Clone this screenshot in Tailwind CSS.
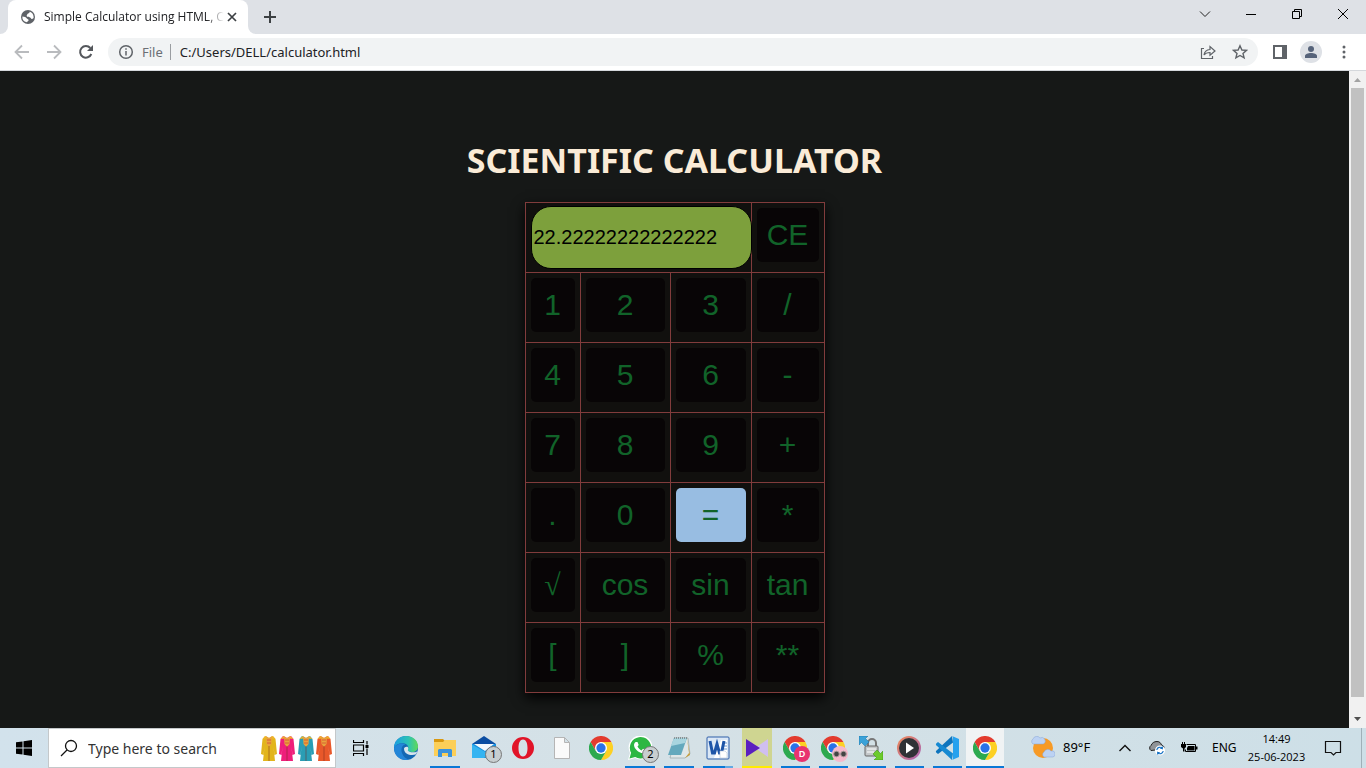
<!DOCTYPE html>
<html lang="en">
<head>
<meta charset="utf-8">
<title>Simple Calculator using HTML, CSS</title>
<script src="https://cdn.jsdelivr.net/npm/@tailwindcss/browser@4"></script>
</head>
<body class="flex h-screen flex-col overflow-hidden bg-[#161817] font-['Noto_Sans','Open_Sans',sans-serif] text-[#202124]">
<svg class="hidden">
  <symbol id="chrome" viewBox="0 0 48 48">
    <path fill="#fdd023" d="M24 24 L24 12 H44.8 A24 24 0 0 1 24 48 L34.4 30 Z"/>
    <path fill="#e33b2e" d="M24 12H44.8A24 24 0 0 0 3.2 12L13.6 30Z"/>
    <path fill="#2da94f" d="M13.6 30L3.2 12A24 24 0 0 0 24 48L34.4 30Z"/>
    <circle cx="24" cy="24" r="12" fill="#fff"/><circle cx="24" cy="24" r="9.3" fill="#2a72e8"/>
  </symbol>
  <symbol id="coat" viewBox="0 0 18 28">
    <path d="M5 2L9 4L13 2L15.500 5L17 20L14.500 21L13.500 13L15 27H3L4.500 13L3.500 21L1 20L2.500 5Z"/>
    <path d="M6 2L9 4L12 2L11.500 10L9 13L6.500 10Z" fill="#e8a33d"/><path d="M9 12V27" stroke="#7a2a1d" stroke-opacity=".5"/><path d="M7 6h4M7 9h4" stroke="#c33" stroke-opacity=".6" stroke-width="1"/>
    <path d="M2.500 5l3-3 1 2.500zM15.500 5l-3-3-1 2.500z" fill="#f0b428"/>
  </symbol>
</svg>

<header class="shrink-0">
  <div class="flex h-[34px] items-stretch justify-between bg-[#dee1e6]">
    <div class="flex">
      <div class="flex w-2 flex-col justify-end bg-white"><div class="h-full rounded-br-lg bg-[#dee1e6]"></div></div>
      <div class="flex w-60 items-center rounded-t-lg bg-white pr-2 pl-3">
        <svg class="size-4 shrink-0" viewBox="0 0 16 16"><circle cx="8" cy="8" r="7" fill="#5f6368"/><path fill="#fff" d="M2.4 7.6C4.5 7.8 6 8.2 6.6 9.2S9 10 8.6 11.4L6.8 13.3C3.5 12.8 2 10.500 2.400 7.600ZM9.500 2.700C10 4.500 7.500 4 7.300 5.300S6 6.500 7 7.400S10.200 7.500 10.800 9.100S12.700 9.700 13.600 9C14 5.500 12 3.300 9.500 2.700Z"/></svg>
        <span class="ml-2 min-w-0 flex-1 overflow-hidden font-['Open_Sans',sans-serif] text-xs whitespace-nowrap [mask-image:linear-gradient(to_right,#000_90%,transparent)]">Simple Calculator using HTML, CSS</span>
        <button aria-label="Close tab" class="flex size-4 items-center justify-center"><svg class="size-4" viewBox="0 0 16 16" stroke="#3c4043" stroke-width="1.7"><path d="M4 4l8 8M12 4l-8 8"/></svg></button>
      </div>
      <div class="w-2 bg-white"><div class="h-full rounded-bl-lg bg-[#dee1e6]"></div></div>
      <button aria-label="New tab" class="ml-1 flex w-5 items-center justify-center"><svg class="size-4" viewBox="0 0 16 16" stroke="#3c4043" stroke-width="2"><path d="M8 2v12M2 8h12"/></svg></button>
    </div>
    <div class="flex h-7 text-black">
      <button aria-label="Search tabs" class="flex w-[46px] items-center justify-center"><svg class="size-3" viewBox="0 0 12 12" fill="none" stroke="#222"><path d="M1 3.500l5 5 5-5"/></svg></button>
      <button aria-label="Minimize" class="flex w-[46px] items-center justify-center"><svg class="size-3" viewBox="0 0 12 12"><path d="M1 6h10v1H1z"/></svg></button>
      <button aria-label="Restore" class="flex w-[46px] items-center justify-center"><svg class="size-3" viewBox="0 0 12 12" fill="none" stroke="#000"><path d="M1.500 3.500h7v7h-7zM3.500 3.500v-2h7v7h-2"/></svg></button>
      <button aria-label="Close" class="flex w-[46px] items-center justify-center"><svg class="size-3" viewBox="0 0 12 12" stroke="#000"><path d="M1 1l10 10M11 1L1 11"/></svg></button>
    </div>
  </div>
  <div class="flex h-[37px] items-center border-b border-[#d5d8dc] bg-white pr-3.5 pl-3">
    <button aria-label="Back" class="flex w-5 justify-center"><svg class="size-4" viewBox="0 0 16 16" fill="none" stroke="#b9bbbe" stroke-width="1.800"><path d="M15 8H2M8 1.500L1.500 8L8 14.500"/></svg></button>
    <button aria-label="Forward" class="ml-3 flex w-5 justify-center"><svg class="size-4" viewBox="0 0 16 16" fill="none" stroke="#b9bbbe" stroke-width="1.800"><path d="M1 8h13M8 1.500L14.500 8L8 14.500"/></svg></button>
    <button aria-label="Reload" class="ml-3 flex w-5 justify-center"><svg class="size-4" viewBox="0 0 16 16" fill="none" stroke="#54575c" stroke-width="2"><path d="M13.300 10A5.800 5.800 0 1 1 12.300 4"/><path d="M15 1v6H9z" fill="#54575c" stroke="none"/></svg></button>
    <div class="ml-3 flex h-7 flex-1 items-center rounded-full bg-[#f1f3f4] px-2.5">
      <svg class="size-4" viewBox="0 0 16 16" fill="none" stroke="#5f6368" stroke-width="1.500"><circle cx="8" cy="8" r="6.300"/><path d="M8 7v4.500M8 4.300v1.500"/></svg>
      <span class="ml-2 pt-px text-[13px] text-[#6b6f74]">File</span>
      <span class="mr-[9px] ml-[7px] h-4 w-px bg-[#9a9da1]"></span>
      <input aria-label="Address" value="C:/Users/DELL/calculator.html" class="min-w-0 flex-1 bg-transparent pt-px text-[13px] outline-none">
      <button aria-label="Share"><svg class="size-4" viewBox="0 0 16 16" fill="none" stroke="#5f6368" stroke-width="1.200"><path d="M4 4.500H1.500v10h11V12M4 11C4.500 7.500 6.500 5.800 10 5.500V2.500L15 7l-5 4.300V8.500C7.500 8.500 5.500 9 4 11Z"/></svg></button>
      <button aria-label="Bookmark" class="ml-4"><svg class="size-4" viewBox="0 0 16 16" fill="none" stroke="#5f6368" stroke-width="1.400"><path d="M8 1.800l1.900 4.200 4.600.4-3.500 3 1.100 4.500L8 11.500l-4.100 2.400L5 9.400l-3.500-3 4.600-.4z"/></svg></button>
    </div>
    <button aria-label="Side panel" class="ml-3.5"><svg class="size-4" viewBox="0 0 16 16"><path fill="#5f6368" d="M1 1h14v14H1z"/><path fill="#fff" d="M3 3h7v10H3z"/></svg></button>
    <button aria-label="Profile" class="ml-3 flex size-[22px] items-center justify-center rounded-full bg-[#dee1e6]"><svg class="size-3.5" viewBox="0 0 14 14" fill="#56637a"><circle cx="7" cy="4" r="3"/><path d="M1 13V11C1 9 4 8 7 8s6 1 6 3v2z"/></svg></button>
    <button aria-label="Menu" class="ml-3.5"><svg class="size-4" viewBox="0 0 16 16" fill="#5f6368"><circle cx="8" cy="3" r="1.500"/><circle cx="8" cy="8" r="1.500"/><circle cx="8" cy="13" r="1.500"/></svg></button>
  </div>
</header>

<div class="flex min-h-0 flex-1">
  <main class="flex flex-1 flex-col items-center pt-[65px]">
    <h1 class="text-[34px] leading-[48px] font-bold whitespace-nowrap text-[#faebd7]">SCIENTIFIC CALCULATOR</h1>
    <div class="mt-[18px] grid auto-rows-[69px] grid-cols-[54px_89px_80px_72px] gap-px bg-[#813c3c] p-px font-['Liberation_Sans',sans-serif] text-[30px] text-[#116329] shadow-[0_5px_12px_#000]">
      <div class="col-span-3 bg-[#11100e] pt-[3px] pl-[5px]"><input aria-label="Result" value="22.22222222222222" class="block h-[63px] w-[221px] rounded-[20px] border border-black bg-[#7da03c] px-0.5 text-xl text-black outline-none"></div>
      <div class="bg-[#11100e] px-[5px] pt-[5px]"><button class="h-[54px] w-full rounded-[5px] bg-[#080506] pb-0.5">CE</button></div>
      <div class="bg-[#11100e] px-[5px] pt-[5px]"><button class="h-[54px] w-full rounded-[5px] bg-[#080506] pb-0.5">1</button></div>
      <div class="bg-[#11100e] px-[5px] pt-[5px]"><button class="h-[54px] w-full rounded-[5px] bg-[#080506] pb-0.5">2</button></div>
      <div class="bg-[#11100e] px-[5px] pt-[5px]"><button class="h-[54px] w-full rounded-[5px] bg-[#080506] pb-0.5">3</button></div>
      <div class="bg-[#11100e] px-[5px] pt-[5px]"><button class="h-[54px] w-full rounded-[5px] bg-[#080506] pb-0.5">/</button></div>
      <div class="bg-[#11100e] px-[5px] pt-[5px]"><button class="h-[54px] w-full rounded-[5px] bg-[#080506] pb-0.5">4</button></div>
      <div class="bg-[#11100e] px-[5px] pt-[5px]"><button class="h-[54px] w-full rounded-[5px] bg-[#080506] pb-0.5">5</button></div>
      <div class="bg-[#11100e] px-[5px] pt-[5px]"><button class="h-[54px] w-full rounded-[5px] bg-[#080506] pb-0.5">6</button></div>
      <div class="bg-[#11100e] px-[5px] pt-[5px]"><button class="h-[54px] w-full rounded-[5px] bg-[#080506] pb-0.5">-</button></div>
      <div class="bg-[#11100e] px-[5px] pt-[5px]"><button class="h-[54px] w-full rounded-[5px] bg-[#080506] pb-0.5">7</button></div>
      <div class="bg-[#11100e] px-[5px] pt-[5px]"><button class="h-[54px] w-full rounded-[5px] bg-[#080506] pb-0.5">8</button></div>
      <div class="bg-[#11100e] px-[5px] pt-[5px]"><button class="h-[54px] w-full rounded-[5px] bg-[#080506] pb-0.5">9</button></div>
      <div class="bg-[#11100e] px-[5px] pt-[5px]"><button class="h-[54px] w-full rounded-[5px] bg-[#080506] pb-0.5">+</button></div>
      <div class="bg-[#11100e] px-[5px] pt-[5px]"><button class="h-[54px] w-full rounded-[5px] bg-[#080506] pb-0.5">.</button></div>
      <div class="bg-[#11100e] px-[5px] pt-[5px]"><button class="h-[54px] w-full rounded-[5px] bg-[#080506] pb-0.5">0</button></div>
      <div class="bg-[#11100e] px-[5px] pt-[5px]"><button class="h-[54px] w-full rounded-[5px] bg-[#98bde2] pb-0.5">=</button></div>
      <div class="bg-[#11100e] px-[5px] pt-[5px]"><button class="h-[54px] w-full rounded-[5px] bg-[#080506] pb-0.5">*</button></div>
      <div class="bg-[#11100e] px-[5px] pt-[5px]"><button class="h-[54px] w-full rounded-[5px] bg-[#080506] pb-0.5 font-['Liberation_Serif',serif]">√</button></div>
      <div class="bg-[#11100e] px-[5px] pt-[5px]"><button class="h-[54px] w-full rounded-[5px] bg-[#080506] pb-0.5">cos</button></div>
      <div class="bg-[#11100e] px-[5px] pt-[5px]"><button class="h-[54px] w-full rounded-[5px] bg-[#080506] pb-0.5">sin</button></div>
      <div class="bg-[#11100e] px-[5px] pt-[5px]"><button class="h-[54px] w-full rounded-[5px] bg-[#080506] pb-0.5">tan</button></div>
      <div class="bg-[#11100e] px-[5px] pt-[5px]"><button class="h-[54px] w-full rounded-[5px] bg-[#080506] pb-0.5">[</button></div>
      <div class="bg-[#11100e] px-[5px] pt-[5px]"><button class="h-[54px] w-full rounded-[5px] bg-[#080506] pb-0.5">]</button></div>
      <div class="bg-[#11100e] px-[5px] pt-[5px]"><button class="h-[54px] w-full rounded-[5px] bg-[#080506] pb-0.5">%</button></div>
      <div class="bg-[#11100e] px-[5px] pt-[5px]"><button class="h-[54px] w-full rounded-[5px] bg-[#080506] pb-0.5">**</button></div>
    </div>
  </main>
  <div class="flex w-[17px] shrink-0 flex-col items-center bg-[#f1f1f1]">
    <svg class="h-[17px] w-[17px]" viewBox="0 0 17 17"><path d="M5 11h7L8.500 7z" fill="#a3a3a3"/></svg>
    <div class="mb-3.5 w-[13px] flex-1 bg-[#c1c1c1]"></div>
    <svg class="h-[17px] w-[17px]" viewBox="0 0 17 17"><path d="M5 6h7L8.500 10z" fill="#505050"/></svg>
  </div>
</div>

<footer class="flex h-10 shrink-0 bg-linear-to-r from-[#d2e2ec] via-[#d5e1e6] to-[#cddfe7] text-black">
  <button aria-label="Start" class="flex w-12 items-center justify-center"><svg class="size-4" viewBox="0 0 16 16"><path d="M0 2.300L6.500 1.400V7.500H0zM7.500 1.200L16 0v7.500H7.500zM0 8.500h6.500v6.100L0 13.700zM7.500 8.500H16V16l-8.500-1.200z"/></svg></button>
  <label class="flex w-72 items-center border border-[#c4c8ca] bg-white pl-[11px]">
    <svg class="size-[18px]" viewBox="0 0 18 18" fill="none" stroke="#111" stroke-width="1.300"><circle cx="11" cy="7" r="5.500"/><path d="M7 11L1 17"/></svg>
    <input aria-label="Search" placeholder="Type here to search" class="ml-2.5 w-0 flex-1 pt-px text-sm outline-none placeholder:text-[#333]">
    <svg class="mr-px h-7 w-[74px]" viewBox="0 0 74 28"><use href="#coat" width="18" height="28" fill="#e2b51c"/><use href="#coat" x="18" width="18" height="28" fill="#ee1f7b"/><use href="#coat" x="37" width="18" height="28" fill="#2a9db4"/><use href="#coat" x="55" width="18" height="28" fill="#e8582a"/></svg>
  </label>
  <button aria-label="Task view" class="flex w-[50px] items-center justify-center pr-px"><svg class="size-4" viewBox="0 0 16 16" fill="none" stroke="#000" stroke-width="1.200"><path d="M.5 0v2.500h10V0M.5 16v-2.500h10V16M.5 5h10v6H.5zM14 1v3.500M14 8.500V15"/><path d="M12.500 5h3v3h-3z" fill="#000" stroke="none"/></svg></button>
  <nav class="flex" aria-label="Taskbar">
    <button aria-label="Edge" class="flex w-[39px] items-center justify-center"><svg class="size-6" viewBox="0 0 24 24"><defs><linearGradient id="eg" x2="1"><stop stop-color="#1b9de2"/><stop offset=".6" stop-color="#2cc3b4"/><stop offset="1" stop-color="#62d957"/></linearGradient></defs><circle cx="12" cy="12" r="12" fill="#1468b3"/><path fill="url(#eg)" d="M0 12C0 4.500 6 0 12 0C19 0 24 4.500 24 10.500C24 14 21.500 16 18 16C15 16 13.500 15 13.800 14C15 12.500 14.500 8.500 10.500 7.500C6 6.500 1.500 8.500 0 12Z"/><path fill="#2386d8" d="M0 12C2 8 8 6.500 11.500 8.500C8 9 6.500 13 8 17C9.200 20.500 12 23 15 23.600C7 25.500 0 20 0 12Z"/><path fill="#d8e5ec" d="M10 12.500C10.500 11 12 10.300 13.500 10.800C14.700 12 14.500 13 13.800 14.200C14 16 20 17.500 23.500 15.200L22 18.300C18 20 10 19 10 12.500Z"/></svg></button>
    <button aria-label="File Explorer" class="flex w-[39px] items-center justify-center bg-[linear-gradient(#0a78d6,#0a78d6)] bg-[length:30px_2px] bg-bottom bg-no-repeat"><svg class="size-[22px]" viewBox="0 0 22 22"><path fill="#d9980f" d="M0 2h9l2 2v4H0z"/><path fill="#fccf58" d="M0 5h9l2-2h11v16H0z"/><path fill="#3b93dc" d="M4 20v-7l1-1h12l1 1v7h-4v-4H8v4z"/></svg></button>
    <button aria-label="Mail, 1 unread" class="relative flex w-[39px] items-center justify-center"><svg class="size-6" viewBox="0 0 24 24"><path fill="#0b4da2" d="M0 8L12 0l12 8v4H0z"/><path fill="#158fdf" d="M0 8h24v14H0z"/><path fill="#f4f9fd" d="M2 8h20l-9 7z"/><path fill="#35b4f1" d="M0 22V8.500L17 18l-5 4z"/></svg><span class="absolute top-[18px] left-[21px] flex size-[17px] items-center justify-center rounded-full border border-[#777] bg-[#c8ced0] text-[11px]">1</span></button>
    <button aria-label="Opera" class="flex w-[39px] items-center justify-center"><svg class="size-[22px]" viewBox="0 0 22 22"><path fill="#e11428" fill-rule="evenodd" d="M11 0A11 11 0 1 0 11 22A11 11 0 1 0 11 0M11 2.500C14.500 2.500 15.500 7 15.500 11S14.500 19.500 11 19.500S6.500 15 6.500 11S7.500 2.500 11 2.500"/></svg></button>
    <button aria-label="Document" class="flex w-[39px] items-center justify-center"><svg class="h-[22px] w-4" viewBox="0 0 16 22"><path fill="#fafafa" stroke="#b5b5b5" d="M.5.500h10l5 5v16H.5zM10.500.500v5h5"/></svg></button>
    <button aria-label="Chrome" class="flex w-[39px] items-center justify-center"><svg class="size-6"><use href="#chrome"/></svg></button>
    <button aria-label="WhatsApp, 2 unread" class="relative flex w-[39px] items-center justify-center bg-[linear-gradient(#0a78d6,#0a78d6)] bg-[length:30px_2px] bg-bottom bg-no-repeat"><svg class="size-6" viewBox="0 0 24 24"><path fill="#fff" d="M0 24l2-7A12 12 0 1 1 7 22z"/><path fill="#2cb742" d="M1.500 22.500l1.600-5.700A10.700 10.700 0 1 1 7.200 21z"/><path fill="#fff" d="M8 6l1.500 0 1.200 3-1.200 1.600c1 2 2.200 3 4 3.800l1.500-1.700 3 1.500c0 2-1.500 3-3 3C10.500 17 6 12.500 6 9c0-1.500 1-3 2-3z"/></svg><span class="absolute top-[18px] left-[22px] flex size-[17px] items-center justify-center rounded-full border border-[#777] bg-[#c8ced0] text-[11px]">2</span></button>
    <button aria-label="Notepad" class="flex w-[39px] items-center justify-center bg-[linear-gradient(#0a78d6,#0a78d6)] bg-[length:30px_2px] bg-bottom bg-no-repeat"><svg class="size-6" viewBox="0 0 24 24"><path fill="#dfe7e8" stroke="#8f9c9e" stroke-width=".6" d="M8 2h13l2 16-5 4H3z"/><path fill="#64a9bd" d="M7 2h13l-6 17H1z"/><path fill="#a8d5df" d="M7 2h13l-2 5L4 10z"/><path fill="#c79f3e" d="M20 2l3 17-5 3 4-5z"/><path stroke="#555" stroke-dasharray="1" d="M7 2h13"/></svg></button>
    <button aria-label="Word" class="flex w-[39px] items-center justify-center bg-[linear-gradient(90deg,#0a78d6_73%,#62a9e3_73%)] bg-[length:30px_2px] bg-bottom bg-no-repeat"><svg class="size-6" viewBox="0 0 24 24"><rect x="1" y="1" width="22" height="22" rx="1" fill="#dbe8f6" stroke="#2f5ea8"/><path d="M15 4h6v18H8" fill="#fff"/><path d="M16 7h5M16 10h5M16 13h5" stroke="#6f9bd0"/><path d="M4 5l2.500 12h2l2.500-9 2.500 9h2L18 5" fill="none" stroke="#1e55a8" stroke-width="3"/><path d="M14 15h5l2 2v5h-7z" fill="#fff" stroke="#b8c7d8" stroke-width=".6"/></svg></button>
    <button aria-label="KMPlayer" class="flex w-[39px] items-center justify-center bg-[linear-gradient(#ffec00,#ffec00),linear-gradient(#cfd591,#cfd591)] bg-[length:30px_2px,30px_40px] bg-bottom bg-no-repeat"><svg class="h-5 w-[22px]" viewBox="0 0 22 20"><path fill="#d0bff0" d="M22 1v18L9 10z"/><path fill="#5b20bf" d="M0 1l14 9L0 19z"/></svg></button>
    <button aria-label="Chrome, profile D" class="relative flex w-[38px] items-center justify-center bg-[linear-gradient(#0a78d6,#0a78d6)] bg-[length:29px_2px] bg-bottom bg-no-repeat"><svg class="size-6"><use href="#chrome"/></svg><span class="absolute top-[18px] left-[18px] flex size-4 items-center justify-center rounded-full bg-[#e8336f] text-[9px] font-semibold text-white">D</span></button>
    <button aria-label="Chrome, guest profile" class="relative flex w-[38px] items-center justify-center bg-[linear-gradient(#0a78d6,#0a78d6)] bg-[length:29px_2px] bg-bottom bg-no-repeat"><svg class="size-6"><use href="#chrome"/></svg><svg class="absolute top-[18px] left-[18px] size-4" viewBox="0 0 16 16"><circle cx="8" cy="8" r="8" fill="#f6b8cb"/><circle cx="4.500" cy="8" r="2.800" fill="#444" stroke="#a99"/><circle cx="11.500" cy="8" r="2.800" fill="#444" stroke="#a99"/></svg></button>
    <button aria-label="WinSCP" class="flex w-[38px] items-center justify-center bg-[linear-gradient(#0a78d6,#0a78d6)] bg-[length:29px_2px] bg-bottom bg-no-repeat"><svg class="size-6" viewBox="0 0 24 24"><path d="M9 11V7a4 4 0 0 1 8 0v4" fill="none" stroke="#777" stroke-width="2"/><rect x="6" y="10" width="13" height="10" rx="1" fill="#c4c8ca" stroke="#666"/><path d="M8 13h9M8 16h7" stroke="#fff"/><path fill="#3ba2d8" stroke="#1b6fa0" stroke-width=".5" d="M0 0h9L6.500 2.500 10 6 6 10 2.500 6.500 0 9z"/><path fill="#6ccb2c" stroke="#378a10" stroke-width=".5" d="M24 24h-9l2.500-2.500L14 18l4-4 3.500 3.500L24 15z"/></svg></button>
    <button aria-label="Media Player" class="flex w-[38px] items-center justify-center bg-[linear-gradient(#0a78d6,#0a78d6)] bg-[length:29px_2px] bg-bottom bg-no-repeat"><svg class="size-6" viewBox="0 0 24 24"><defs><linearGradient id="mp" y2="1"><stop stop-color="#f08a55"/><stop offset="1" stop-color="#a763b8"/></linearGradient></defs><circle cx="12" cy="12" r="12" fill="url(#mp)"/><circle cx="12" cy="12" r="10" fill="#303236"/><path fill="#fff" d="M9 6.500l8 5.500-8 5.500z"/></svg></button>
    <button aria-label="Visual Studio Code" class="flex w-[38px] items-center justify-center bg-[linear-gradient(#0a78d6,#0a78d6)] bg-[length:29px_2px] bg-bottom bg-no-repeat"><svg class="size-6" viewBox="0 0 24 24"><path fill="#0d74bd" d="M17 0L1.500 14.500c-1 1-.7 1.500 0 2.200L3 18l15-11.500z"/><path fill="#1689d2" d="M17 24L1.500 9.500c-1-1-.7-1.500 0-2.200L3 6l15 11.500z"/><path fill="#26a1ee" d="M17 0l7 3v18l-7 3c.7-.5 1-1 1-2V2c0-1-.3-1.500-1-2z"/></svg></button>
    <button aria-label="Chrome, active" class="flex w-[38px] items-center justify-center border-b-2 border-[#0a78d6] bg-[#f0f3f4] pt-0.5"><svg class="size-6"><use href="#chrome"/></svg></button>
  </nav>
  <div class="ml-auto flex items-center text-xs whitespace-nowrap">
    <svg class="h-6 w-6" viewBox="0 0 24 24"><circle cx="12" cy="12" r="10" fill="#f79a26"/><path fill="#bcd2f3" stroke="#86a4d6" stroke-width=".5" d="M2 8a3 3 0 0 1 0-5 4 4 0 0 1 7-1 3 3 0 0 1 3.500 6zM13 21a3 3 0 0 1 0-5 4 4 0 0 1 7-1 3 3 0 0 1 2 6z"/></svg>
    <span class="ml-2 w-[51px] text-[13px]">89°F</span>
    <button aria-label="Show hidden icons" class="mr-[17px] ml-[5px]"><svg class="h-3 w-3" viewBox="0 0 12 12" fill="none" stroke="#111" stroke-width="1.400"><path d="M.5 9L6 3.500 11.500 9"/></svg></button>
    <svg class="h-4 w-[18px]" viewBox="0 0 18 16"><path fill="#909498" stroke="#222" d="M3 10.500a3 3 0 0 1 0-5C4 3 6 1.500 9 1.500s4 2 4.500 3.500c2 .5 3 2 2 4z"/><circle cx="12" cy="10.500" r="5" fill="#fff"/><path d="M8.800 10a3.200 3.200 0 0 1 5.500-1.700V6.500M15.200 11a3.200 3.200 0 0 1-5.500 1.700v1.800M14.300 8.500h-2M9.700 12.500h2" fill="none" stroke="#1672c4" stroke-width="1.200"/></svg>
    <svg class="mr-3.5 ml-[15px] h-4 w-[17px]" viewBox="0 0 17 16"><path d="M5.500 4.500h9v7h-10v-2" fill="none" stroke="#000"/><path d="M7 6h6.500v4.500H6V8zM15 6.500h1.500v3H15zM0 4h5v3L3.500 8.500v3H2v-3L0 7zM1 2h1v2H1zM3 2h1v2H3z"/></svg>
    <span class="w-6 text-xs">ENG</span>
    <div class="ml-2 w-[65px] text-center font-['Open_Sans',sans-serif] text-[11px] leading-[18px]"><div>14:49</div><div>25-06-2023</div></div>
    <button aria-label="Notifications" class="mr-[19px] ml-[15px]"><svg class="size-[18px]" viewBox="0 0 18 18" fill="none" stroke="#111" stroke-width="1.200"><path d="M1.500 2.500h15v11H12L9.500 16 7 13.500H1.500z"/></svg></button>
    <div class="h-10 w-[5px] border-l border-[#9fb0b8]"></div>
  </div>
</footer>
</body>
</html>
